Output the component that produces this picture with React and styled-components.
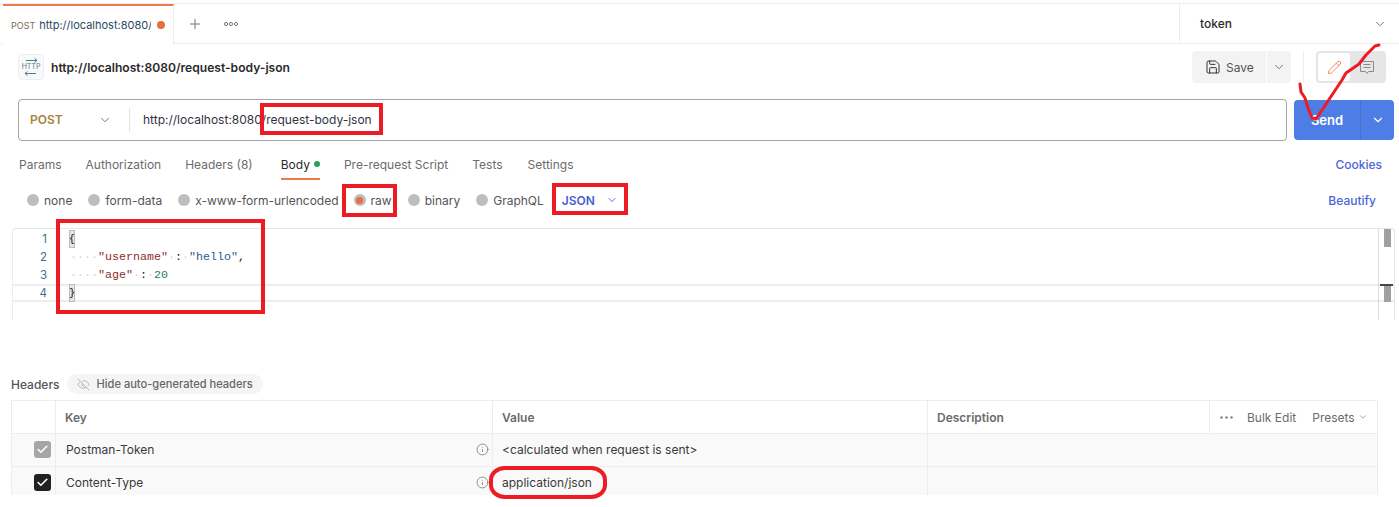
import styled, { createGlobalStyle } from "styled-components";
import { ChevronDown, Plus, Save, Pencil, EyeOff, Info, Check } from "lucide-react";

const GlobalStyle = createGlobalStyle`
  html, body {
    margin: 0;
    padding: 0;
    background: #fff;
  }
  * {
    box-sizing: border-box;
  }
`;

const Page = styled.div`
  position: relative;
  width: 1399px;
  height: 507px;
  overflow: hidden;
  background: #fff;
  font-family: Inter, "Liberation Sans", sans-serif;
  font-size: 12px;
  color: #212121;
`;

const Window = styled.div`
  height: 495px;
  padding-top: 3px;
  overflow: hidden;
`;

const TabBar = styled.div`
  display: flex;
  align-items: stretch;
  height: 41px;
  border-top: 1px solid #ededed;
  border-bottom: 1px solid #ededed;
`;

const ActiveTab = styled.div`
  display: flex;
  align-items: center;
  width: 171px;
  margin-left: 3px;
  margin-bottom: -1px;
  padding-left: 8px;
  background: #fff;
  border-top: 2px solid #e87a4b;
  border-right: 1px solid #ededed;
`;

const TabMethod = styled.span`
  font-size: 9px;
  color: #7a6a55;
  margin-right: 4px;
`;

const TabUrl = styled.span`
  width: 112px;
  overflow: hidden;
  white-space: nowrap;
  font-size: 11px;
  color: #2b4a5e;
`;

const Dot = styled.span`
  width: 8px;
  height: 8px;
  margin-left: 6px;
  border-radius: 50%;
  background: #e8703f;
`;

const TabTools = styled.div`
  display: flex;
  align-items: center;
  gap: 21px;
  padding-left: 13px;
  flex: 1;
  color: #777;
`;

const EnvPicker = styled.div`
  display: flex;
  align-items: center;
  justify-content: space-between;
  width: 220px;
  padding: 0 12px 0 20px;
  border-left: 1px solid #ededed;
  font-size: 12px;
  font-weight: 500;
  color: #2a2a2a;
`;

const TitleRow = styled.div`
  display: flex;
  align-items: center;
  height: 46px;
  padding: 0 13px 0 18px;
`;

const ProtocolBadge = styled.div`
  display: flex;
  align-items: center;
  justify-content: center;
  width: 26px;
  height: 26px;
  margin-right: 7px;
  border: 1px solid #eee;
  border-radius: 4px;
  background: #f9f9f9;
`;

const RequestName = styled.div`
  flex: 1;
  font-size: 12.1px;
  font-weight: 600;
  color: #2a2a2a;
`;

const SaveButton = styled.div`
  display: flex;
  align-items: center;
  gap: 5px;
  width: 74px;
  height: 32px;
  padding-left: 13px;
  border-radius: 4px 0 0 4px;
  background: #f3f3f3;
  color: #555;
  font-size: 12px;
`;

const SaveCaret = styled.div`
  display: flex;
  align-items: center;
  justify-content: center;
  width: 24px;
  height: 32px;
  margin-left: 1px;
  border-radius: 0 4px 4px 0;
  background: #f3f3f3;
  color: #666;
`;

const VerticalRule = styled.div`
  width: 1px;
  height: 32px;
  margin: 0 12px;
  background: #ededed;
`;

const ModeToggle = styled.div`
  display: flex;
  align-items: center;
  width: 70px;
  height: 32px;
  padding: 2px;
  border-radius: 4px;
  background: #e6e6e6;
`;

const ModeOption = styled.div`
  display: flex;
  align-items: center;
  justify-content: center;
  width: ${(p) => (p.$active ? "32px" : "34px")};
  height: 28px;
  border-radius: 3px;
  background: ${(p) => (p.$active ? "#fff" : "transparent")};
`;

const UrlRow = styled.div`
  display: flex;
  align-items: center;
  height: 43px;
  margin-top: 8px;
  padding-left: 18px;
`;

const UrlBox = styled.div`
  display: flex;
  align-items: center;
  width: 1269px;
  height: 42px;
  border: 1px solid #a6a6a6;
  border-radius: 4px;
`;

const MethodSelect = styled.div`
  display: flex;
  align-items: center;
  justify-content: space-between;
  width: 111px;
  height: 24px;
  padding: 0 17px 0 11px;
  border-right: 1px solid #e3e3e3;
  font-size: 12px;
  font-weight: 600;
  color: #a5843e;
`;

const UrlText = styled.div`
  padding-left: 13px;
  font-size: 12px;
  color: #33333f;
`;

const SendButton = styled.div`
  display: flex;
  align-items: center;
  width: 100px;
  height: 40px;
  margin-left: 7px;
  border-radius: 4px;
  background: #4f7de6;
  color: #fff;
  font-size: 13px;
  font-weight: 600;
`;

const SendLabel = styled.div`
  display: flex;
  align-items: center;
  justify-content: center;
  width: 67px;
  height: 100%;
  border-right: 1px solid #4470d2;
`;

const SendCaret = styled.div`
  display: flex;
  flex: 1;
  align-items: center;
  justify-content: center;
`;

const RequestTabs = styled.div`
  display: flex;
  align-items: center;
  height: 36px;
  margin-top: 3px;
  padding: 0 17px 0 19px;
`;

const RequestTab = styled.div`
  display: flex;
  align-items: center;
  gap: 4px;
  align-self: stretch;
  margin-right: ${(p) => p.$gap}px;
  border-bottom: 2px solid ${(p) => (p.$active ? "#e87a4b" : "transparent")};
  color: ${(p) => (p.$active ? "#2a2a2a" : "#6b6b6b")};
  font-size: 12px;
  padding-top: 6px;
`;

const GreenDot = styled.span`
  width: 6px;
  height: 6px;
  border-radius: 50%;
  background: #2f9e5b;
`;

const LinkText = styled.div`
  margin-left: auto;
  margin-top: ${(p) => p.$drop ?? 0}px;
  font-size: 12px;
  font-weight: 500;
  color: #4a66d6;
`;

const BodyTypes = styled.div`
  display: flex;
  align-items: center;
  height: 40px;
  padding: 0 23px 0 27px;
`;

const RadioItem = styled.div`
  display: flex;
  align-items: center;
  gap: 5px;
  margin-right: ${(p) => p.$gap}px;
  color: #555;
  font-size: 12px;
`;

const RadioMark = styled.span`
  display: flex;
  align-items: center;
  justify-content: center;
  width: 12px;
  height: 12px;
  border-radius: 50%;
  background: #bdbdbd;
  &::after {
    content: "";
    display: ${(p) => (p.$checked ? "block" : "none")};
    width: 7px;
    height: 7px;
    border-radius: 50%;
    background: #e8703f;
  }
`;

const LanguageSelect = styled.div`
  display: flex;
  align-items: center;
  gap: 11px;
  margin-left: 9px;
  font-size: 12px;
  font-weight: 600;
  color: #4a5fd0;
`;

const Editor = styled.div`
  position: relative;
  height: 92px;
  margin-top: 8px;
  margin-left: 12px;
  width: 1383px;
  padding-top: 1px;
  border-top: 1px solid #e6e6e6;
  border-left: 1px solid #ededed;
  border-right: 1px solid #e6e6e6;
  border-radius: 4px 4px 0 0;
  overflow: hidden;
`;

const CodeLine = styled.div`
  display: flex;
  align-items: center;
  height: 18px;
  font-family: "Liberation Mono", "DejaVu Sans Mono", monospace;
  font-size: 11.67px;
  white-space: pre;
  background: ${(p) => (p.$current ? "#fff" : "transparent")};
  box-shadow: ${(p) =>
    p.$current ? "inset 0 2px 0 #ededed, inset 0 -2px 0 #ededed" : "none"};
`;

const LineNumber = styled.span`
  width: 34px;
  margin-right: 23px;
  text-align: right;
  font-family: Inter, sans-serif;
  font-size: 11.5px;
  color: #3f6f86;
`;

const Bracket = styled.span`
  display: flex;
  align-items: center;
  justify-content: center;
  width: 6px;
  height: 18px;
  margin-left: -1px;
  background: #e6e6e6;
  outline: 1px solid #bbb;
  outline-offset: -1px;
  color: #222;
`;

const Whitespace = styled.span`
  color: #d0d0d0;
`;

const JsonKey = styled.span`
  color: #8b2f2f;
`;

const JsonString = styled.span`
  color: #2b5b8f;
`;

const JsonNumber = styled.span`
  color: #2d7a5f;
`;

const ScrollGutter = styled.div`
  position: absolute;
  top: 0;
  right: 15px;
  bottom: 0;
  width: 1px;
  background: #dcdcdc;
`;

const ScrollThumb = styled.div`
  position: absolute;
  right: 3px;
  width: 7px;
  top: ${(p) => p.$top}px;
  height: ${(p) => p.$height}px;
  background: #a0a0a0;
`;

const ScrollMark = styled.div`
  position: absolute;
  right: 1px;
  top: 55px;
  width: 13px;
  height: 2px;
  background: #444;
`;

const HeadersBar = styled.div`
  display: flex;
  align-items: center;
  gap: 7px;
  height: 24px;
  margin-top: 52px;
  padding-left: 11px;
  color: #555;
  font-size: 12px;
  font-weight: 500;
`;

const HidePill = styled.div`
  display: flex;
  align-items: center;
  gap: 7px;
  height: 20px;
  padding: 0 10px;
  border-radius: 10px;
  background: #f5f5f5;
  color: #666;
  font-size: 11.1px;
  font-weight: 500;
`;

const Table = styled.div`
  width: 1367px;
  margin: 4px 0 0 11px;
  border: 1px solid #ededed;
  border-bottom: none;
`;

const Row = styled.div`
  display: grid;
  grid-template-columns: 44px 437px 435px 1fr;
  height: ${(p) => p.$height}px;
  background: ${(p) => (p.$header ? "#fff" : "#f9f9f9")};
  border-bottom: 1px solid #ededed;
`;

const Cell = styled.div`
  display: flex;
  align-items: center;
  padding-left: ${(p) => p.$pad ?? 9}px;
  padding-right: ${(p) => p.$padRight ?? 0}px;
  padding-bottom: ${(p) => (p.$head ? 0 : 1)}px;
  border-right: ${(p) => (p.$last ? "none" : "1px solid #ededed")};
  color: ${(p) => (p.$head ? "#6b6b6b" : "#3a3a3a")};
  font-size: 12px;
  font-weight: ${(p) => (p.$head ? 600 : 400)};
`;

const CellText = styled.span`
  flex: 1;
`;

const CheckBox = styled.span`
  display: flex;
  align-items: center;
  justify-content: center;
  width: 17px;
  height: 17px;
  border-radius: 3px;
  background: ${(p) => (p.$muted ? "#a6a6a6" : "#212121")};
  color: #fff;
`;

const DescriptionCell = styled.div`
  display: grid;
  grid-template-columns: 282px 1fr;
`;

const DescriptionText = styled(Cell)`
  border-right: ${(p) => (p.$divider ? "1px solid #ededed" : "none")};
`;

const TableActions = styled.div`
  display: flex;
  align-items: center;
  padding-left: 10px;
  color: #6b6b6b;
  font-size: 12px;
`;

const ActionText = styled.span`
  display: flex;
  align-items: center;
  gap: 3px;
  margin-left: ${(p) => p.$gap}px;
`;

/* red marks somebody drew over the screenshot */
const RedBox = styled.div`
  position: absolute;
  left: ${(p) => p.$x}px;
  top: ${(p) => p.$y}px;
  width: ${(p) => p.$w}px;
  height: ${(p) => p.$h}px;
  border: 4px solid #ed1c24;
`;

const RedEllipse = styled(RedBox)`
  border-radius: 16px / 14px;
`;

const Scribble = styled.svg`
  position: absolute;
  left: 0;
  top: 0;
  pointer-events: none;
`;

const HttpIcon = () => (
  <svg width="20" height="20" viewBox="0 0 20 20" fill="none" stroke="#4f7a8c" strokeWidth="1">
    <path d="M5 3.5h11M13.5 1.5l2.5 2-2.5 2M15 16.5H4M6.5 14.5l-2.5 2 2.5 2" />
    <text x="10" y="12.3" textAnchor="middle" fontSize="7" fontFamily="Inter, sans-serif" fill="#4f7a8c" stroke="none">
      HTTP
    </text>
  </svg>
);

const CommentIcon = () => (
  <svg width="16" height="16" viewBox="0 0 16 16" fill="none" stroke="#8a8a8a" strokeWidth="1">
    <path d="M1.5 2.5h13v10H9.5L8 14.5 6.5 12.5h-5zM4.5 5.5h7M4.5 8.5h7" />
  </svg>
);

const RingDots = () => (
  <svg width="14" height="6" viewBox="0 0 14 6" fill="none" stroke="#777" strokeWidth="1">
    <circle cx="2" cy="3" r="1.6" />
    <circle cx="7" cy="3" r="1.6" />
    <circle cx="12" cy="3" r="1.6" />
  </svg>
);

const SolidDots = () => (
  <svg width="13" height="3" viewBox="0 0 13 3" fill="#888">
    <circle cx="1.5" cy="1.5" r="1.3" />
    <circle cx="6.5" cy="1.5" r="1.3" />
    <circle cx="11.5" cy="1.5" r="1.3" />
  </svg>
);

const bodyTypes = [
  { label: "none", gap: 16 },
  { label: "form-data", gap: 16 },
  { label: "x-www-form-urlencoded", gap: 15 },
  { label: "raw", gap: 16, checked: true },
  { label: "binary", gap: 16 },
  { label: "GraphQL", gap: 9 },
];

const requestTabs = [
  { label: "Params", gap: 24 },
  { label: "Authorization", gap: 24 },
  { label: "Headers (8)", gap: 28 },
  { label: "Body", gap: 24, active: true },
  { label: "Pre-request Script", gap: 24 },
  { label: "Tests", gap: 25 },
  { label: "Settings", gap: 0 },
];

export default function App() {
  return (
    <Page>
      <GlobalStyle />
      <Window>
        <TabBar>
          <ActiveTab>
            <TabMethod>POST</TabMethod>
            <TabUrl>http://localhost:8080/</TabUrl>
            <Dot />
          </ActiveTab>
          <TabTools>
            <Plus size={16} strokeWidth={1.5} />
            <RingDots />
          </TabTools>
          <EnvPicker>
            token
            <ChevronDown size={14} strokeWidth={1.5} color="#666" />
          </EnvPicker>
        </TabBar>

        <TitleRow>
          <ProtocolBadge>
            <HttpIcon />
          </ProtocolBadge>
          <RequestName>http://localhost:8080/request-body-json</RequestName>
          <SaveButton>
            <Save size={16} strokeWidth={1.4} color="#222" />
            Save
          </SaveButton>
          <SaveCaret>
            <ChevronDown size={14} strokeWidth={1.5} />
          </SaveCaret>
          <VerticalRule />
          <ModeToggle>
            <ModeOption $active>
              <Pencil size={15} strokeWidth={1.4} color="#e87a4b" />
            </ModeOption>
            <ModeOption>
              <CommentIcon />
            </ModeOption>
          </ModeToggle>
        </TitleRow>

        <UrlRow>
          <UrlBox>
            <MethodSelect>
              POST
              <ChevronDown size={14} strokeWidth={1.5} color="#666" />
            </MethodSelect>
            <UrlText>http://localhost:8080/request-body-json</UrlText>
          </UrlBox>
          <SendButton>
            <SendLabel>Send</SendLabel>
            <SendCaret>
              <ChevronDown size={14} strokeWidth={2} />
            </SendCaret>
          </SendButton>
        </UrlRow>

        <RequestTabs>
          {requestTabs.map((tab) => (
            <RequestTab key={tab.label} $gap={tab.gap} $active={tab.active}>
              {tab.label}
              {tab.active && <GreenDot />}
            </RequestTab>
          ))}
          <LinkText $drop={4}>Cookies</LinkText>
        </RequestTabs>

        <BodyTypes>
          {bodyTypes.map((item) => (
            <RadioItem key={item.label} $gap={item.gap}>
              <RadioMark $checked={item.checked} />
              {item.label}
            </RadioItem>
          ))}
          <LanguageSelect>
            JSON
            <ChevronDown size={12} strokeWidth={1.8} />
          </LanguageSelect>
          <LinkText>Beautify</LinkText>
        </BodyTypes>

        <Editor>
          <CodeLine>
            <LineNumber>1</LineNumber>
            <Bracket>{"{"}</Bracket>
          </CodeLine>
          <CodeLine>
            <LineNumber>2</LineNumber>
            <Whitespace>····</Whitespace>
            <JsonKey>"username"</JsonKey>
            <Whitespace>·</Whitespace>:<Whitespace>·</Whitespace>
            <JsonString>"hello"</JsonString>,
          </CodeLine>
          <CodeLine>
            <LineNumber>3</LineNumber>
            <Whitespace>····</Whitespace>
            <JsonKey>"age"</JsonKey>
            <Whitespace>·</Whitespace>:<Whitespace>·</Whitespace>
            <JsonNumber>20</JsonNumber>
          </CodeLine>
          <CodeLine $current>
            <LineNumber>4</LineNumber>
            <Bracket>{"}"}</Bracket>
          </CodeLine>
          <ScrollGutter />
          <ScrollThumb $top={0} $height={18} />
          <ScrollThumb $top={55} $height={18} />
          <ScrollMark />
        </Editor>

        <HeadersBar>
          Headers
          <HidePill>
            <EyeOff size={13} strokeWidth={1.5} color="#aaa" />
            Hide auto-generated headers
          </HidePill>
        </HeadersBar>

        <Table>
          <Row $header $height={33}>
            <Cell />
            <Cell $head>Key</Cell>
            <Cell $head>Value</Cell>
            <DescriptionCell>
              <DescriptionText $head $divider>
                Description
              </DescriptionText>
              <TableActions>
                <SolidDots />
                <ActionText $gap={14}>Bulk Edit</ActionText>
                <ActionText $gap={16}>
                  Presets
                  <ChevronDown size={10} strokeWidth={1.5} />
                </ActionText>
              </TableActions>
            </DescriptionCell>
          </Row>
          <Row $height={33}>
            <Cell $pad={22}>
              <CheckBox $muted>
                <Check size={13} strokeWidth={3} />
              </CheckBox>
            </Cell>
            <Cell $pad={10} $padRight={3}>
              <CellText>Postman-Token</CellText>
              <Info size={13} strokeWidth={1.3} color="#666" />
            </Cell>
            <Cell>&lt;calculated when request is sent&gt;</Cell>
            <Cell $last />
          </Row>
          <Row $height={33}>
            <Cell $pad={22}>
              <CheckBox>
                <Check size={13} strokeWidth={3} />
              </CheckBox>
            </Cell>
            <Cell $pad={10} $padRight={3}>
              <CellText>Content-Type</CellText>
              <Info size={13} strokeWidth={1.3} color="#666" />
            </Cell>
            <Cell>application/json</Cell>
            <Cell $last />
          </Row>
        </Table>
      </Window>

      <RedBox $x={260} $y={103} $w={123} $h={32} />
      <RedBox $x={342} $y={184} $w={55} $h={33} />
      <RedBox $x={552} $y={183} $w={76} $h={32} />
      <RedBox $x={56} $y={219} $w={209} $h={95} />
      <RedEllipse $x={489} $y={466} $w={118} $h={33} />
      <Scribble width="1399" height="507" viewBox="0 0 1399 507" fill="none">
        <path
          d="M1300 84l1 8 4 6 3 10 4 10 4 1 10-15 16-24 4-7 13-9 7-9 9-9 4-1"
          stroke="#ed1c24"
          strokeWidth="3"
          strokeLinejoin="round"
          strokeLinecap="round"
        />
      </Scribble>
    </Page>
  );
}
